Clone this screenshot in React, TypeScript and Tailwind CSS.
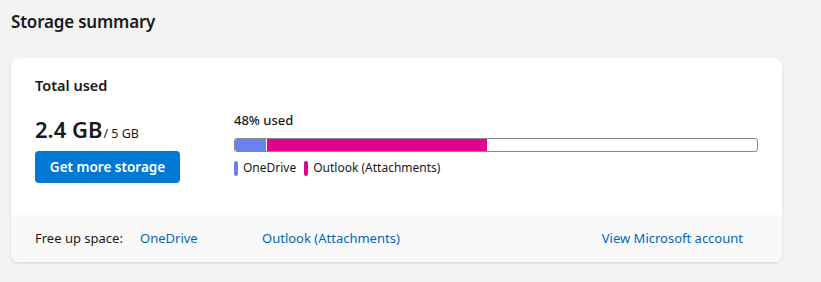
import React from "react";

export default function App() {
  const font = { fontFamily: '"Noto Sans", "Open Sans", sans-serif' };
  return (
    <div className="w-[821px] h-[282px] bg-[#f3f3f3] text-[#1a1a1a] overflow-hidden" style={font}>
      <div className="pl-[11px] pt-[10px]">
        <h1 className="text-[17px] leading-[24px] font-semibold tracking-[-0.2px]">Storage summary</h1>
      </div>
      <div className="ml-[11px] mt-[24px] w-[771px] h-[204px] bg-white rounded-[8px] shadow-[0_1px_3px_rgba(0,0,0,0.13)] overflow-hidden flex flex-col">
        <div className="flex-1 px-[24px] pt-[17px]">
          <div className="text-[14.5px] leading-[20px] font-semibold">Total used</div>
          <div className="flex mt-[19px]">
            <div className="w-[200px]">
              <div className="flex items-baseline">
                <span className="text-[22px] leading-[30px] font-semibold">2.4 GB</span>
                <span className="text-[12.5px] leading-[18px] ml-[1px]">/ 5 GB</span>
              </div>
              <button className="mt-[7px] w-[145px] h-[32px] rounded-[4px] bg-[#0078d4] text-white text-[13.5px] font-semibold leading-[32px]">
                Get more storage
              </button>
            </div>
            <div className="flex-1 -mt-[3px]">
              <div className="text-[13px] leading-[18px] font-medium">48% used</div>
              <div className="mt-[9px] w-[524px] h-[14px] rounded-[3px] border border-[#8a8a8a] flex overflow-hidden">
                <div className="w-[31px] h-full bg-[#6b80f0]"></div>
                <div className="w-[1px] h-full bg-white"></div>
                <div className="w-[220px] h-full bg-[#e3008c]"></div>
              </div>
              <div className="flex items-center mt-[8px] text-[12px] leading-[16px]">
                <span className="w-[4px] h-[15px] rounded-[2px] bg-[#6b80f0] mr-[5px]"></span>
                <span>OneDrive</span>
                <span className="w-[4px] h-[15px] rounded-[2px] bg-[#e3008c] ml-[8px] mr-[5px]"></span>
                <span>Outlook (Attachments)</span>
              </div>
            </div>
          </div>
        </div>
        <div className="h-[47px] bg-[#f9f9f9] flex items-center px-[24px] text-[13px]">
          <span className="w-[105px]">Free up space:</span>
          <a className="text-[#0067c0] w-[122px]">OneDrive</a>
          <a className="text-[#0067c0]">Outlook (Attachments)</a>
          <a className="text-[#0067c0] ml-auto mr-[15px]">View Microsoft account</a>
        </div>
      </div>
    </div>
  );
}
